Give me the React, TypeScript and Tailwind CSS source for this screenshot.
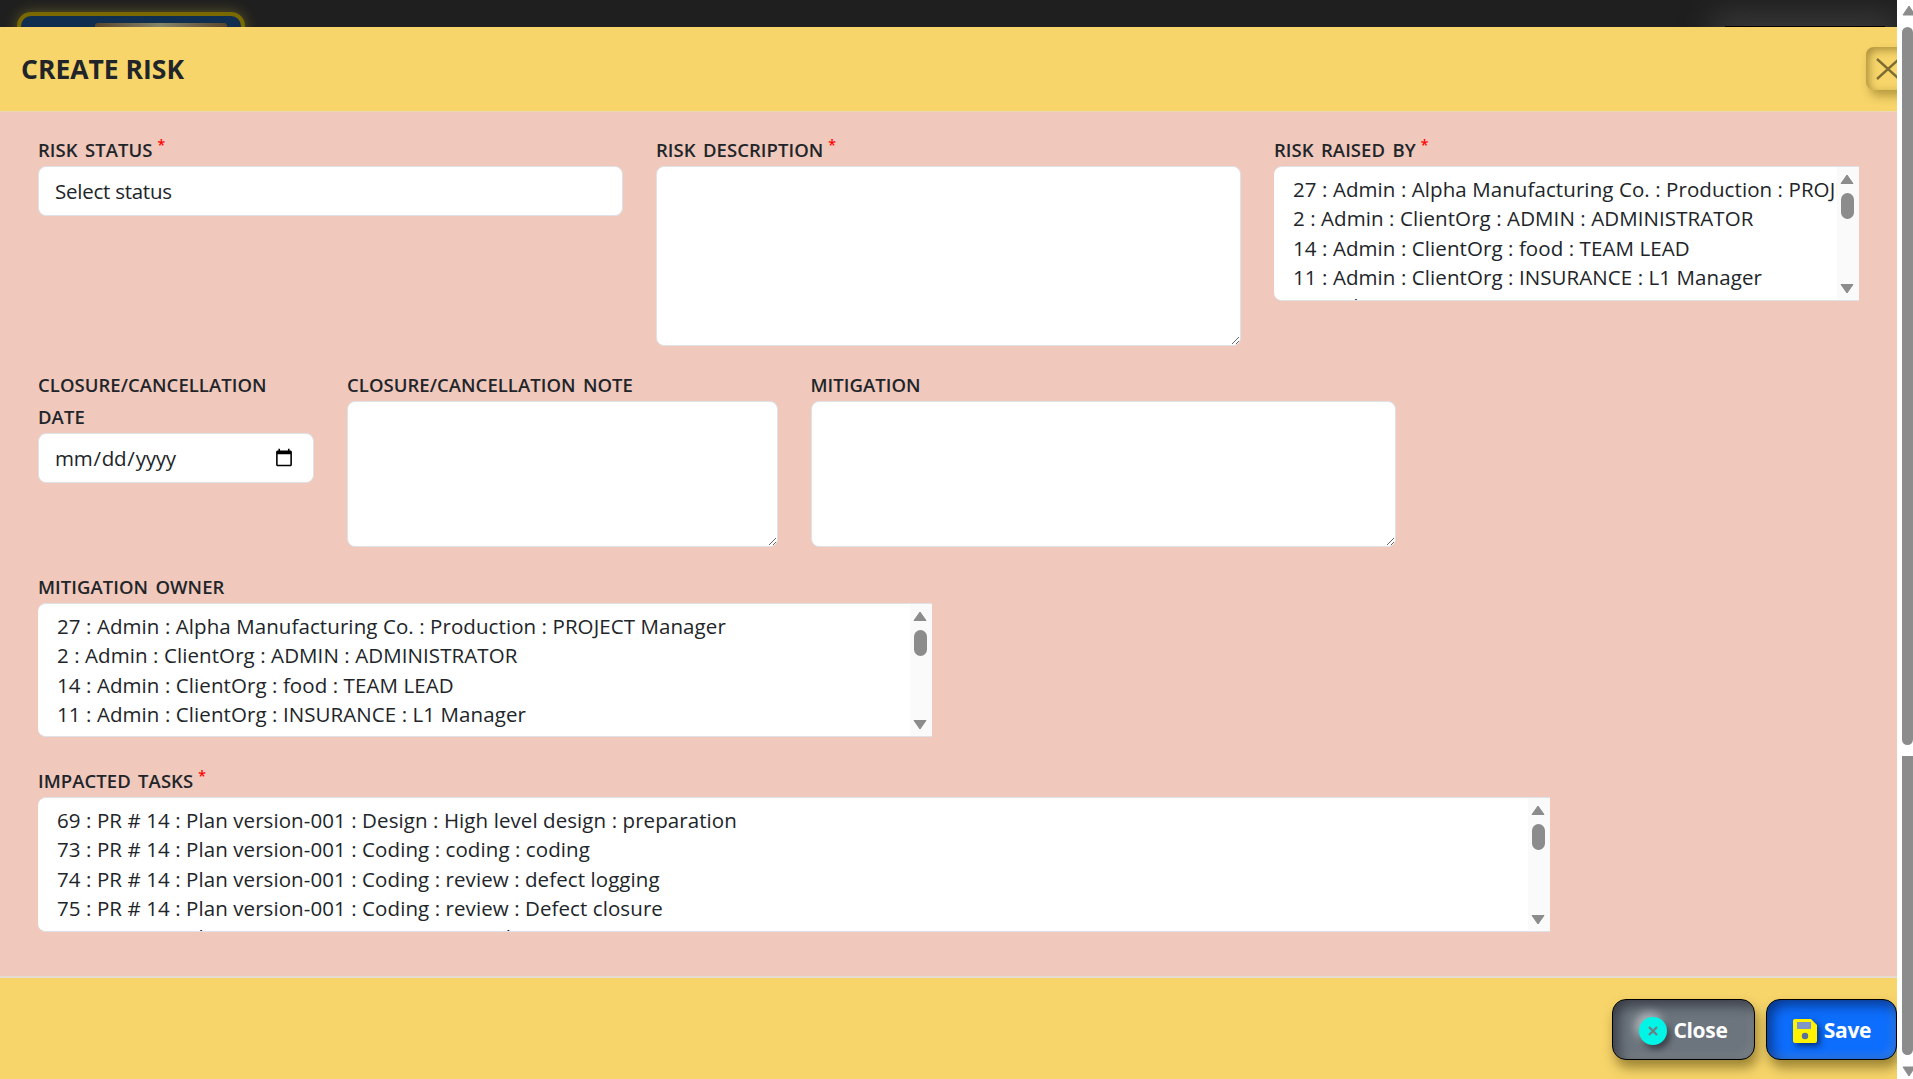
import React from "react";

const owners = [
  "27 : Admin : Alpha Manufacturing Co. : Production : PROJECT Manager",
  "2 : Admin : ClientOrg : ADMIN : ADMINISTRATOR",
  "14 : Admin : ClientOrg : food : TEAM LEAD",
  "11 : Admin : ClientOrg : INSURANCE : L1 Manager",
  "12 : Admin : LOTUS Org : INSURANCE : TEAM LEAD",
];
const tasks = [
  "69 : PR # 14 : Plan version-001 : Design : High level design : preparation",
  "73 : PR # 14 : Plan version-001 : Coding : coding : coding",
  "74 : PR # 14 : Plan version-001 : Coding : review : defect logging",
  "75 : PR # 14 : Plan version-001 : Coding : review : Defect closure",
  "76 : PR # 14 : Plan version-001 : Testing : Test Plan : preparation",
];

function Label({ text, required }: { text: string; required?: boolean }) {
  return (
    <label className="block text-[18.5px] leading-[32px] font-semibold text-[#212529] tracking-[0.05px] [word-spacing:2.5px]">
      {text}
      {required && <sup className="text-[#ff0000] text-[14px] ml-[5px] font-semibold">*</sup>}
    </label>
  );
}

function Arrow({ down }: { down?: boolean }) {
  return (
    <svg width="14" height="11" viewBox="0 0 14 11" className="block">
      <path
        d={down ? "M1 1.5H13L7 10Z" : "M7 1L13 9.5H1Z"}
        fill="#8c8c8c"
        stroke="#8c8c8c"
        strokeWidth="1"
        strokeLinejoin="round"
      />
    </svg>
  );
}

function ListBox({ items, tall }: { items: string[]; tall?: boolean }) {
  return (
    <div className={`flex ${tall ? "h-[135px]" : "h-[134px]"} bg-white rounded-l-[8px] border-b border-t border-[#dee2e6] overflow-hidden`}>
      <div className="flex-1 min-w-0 overflow-hidden pl-[19px] pt-[8px]">
        {items.map((t) => (
          <div key={t} className="h-[29.3px] leading-[29.3px] text-[20.5px] text-[#212529] whitespace-nowrap tracking-[0.08px]">
            {t}
          </div>
        ))}
      </div>
      <div className="w-[22px] shrink-0 bg-[#fafafa] flex flex-col items-center pt-[7px] pb-[6px] pr-[2px]">
        <Arrow />
        <div className="w-[13px] h-[26px] mt-[8px] rounded-full bg-[#8c8c8c]" />
        <div className="flex-1" />
        <Arrow down />
      </div>
    </div>
  );
}

const boxCls =
  "block w-full bg-white border border-[#dee2e6] rounded-[8px] text-[20.5px] text-[#212529] px-[16px] outline-none tracking-[-0.25px]";

export default function App() {
  return (
    <div className="flex h-screen w-full overflow-hidden bg-white font-['Open_Sans','Noto_Sans',sans-serif]">
      <div className="flex-1 min-w-0 flex flex-col overflow-hidden">
        {/* dark page strip behind the dialog */}
        <div className="h-[27px] shrink-0 bg-[#1f1f1f] flex justify-between overflow-hidden pl-[17px] pr-[12px]">
          <div className="mt-[12px] h-[40px] w-[228px] rounded-t-[14px] border-[4px] border-[#7a6800] bg-[#0f2e50] shadow-[0_0_14px_rgba(240,215,60,0.3)] pt-[7px] pl-[74px] pr-[14px]">
            <div className="h-[20px] rounded-[3px] bg-gradient-to-r from-[#5a452c] via-[#85856a] to-[#5a452c]" />
          </div>
          <div className="mt-[26px] h-[8px] w-[160px] bg-black shadow-[0_0_30px_12px_rgba(80,80,80,0.55)]" />
        </div>

        {/* header */}
        <div className="h-[85px] shrink-0 bg-[#f7d56a] border-b border-[#ead9b4] flex items-center justify-between pl-[21px] overflow-hidden">
          <h1 className="text-[26.5px] font-bold text-[#212529] mt-[2px]">CREATE RISK</h1>
          <button className="w-[43px] h-[43px] mr-[-12px] mt-[-1px] shrink-0 rounded-[8px] flex items-center justify-center bg-[#f7d56a] shadow-[inset_3px_3px_8px_rgba(80,60,0,0.45),4px_6px_10px_rgba(90,70,0,0.4)]">
            <svg width="24" height="24" viewBox="0 0 24 24">
              <path d="M1 2L23 22M23 2L1 22" stroke="#7d6c32" strokeWidth="2.4" fill="none" />
            </svg>
          </button>
        </div>

        {/* body */}
        <div className="flex-1 min-h-0 bg-[#f0c8bc] pl-[38px] pt-[22px] pr-[38px]">
          <div className="grid grid-cols-12 gap-x-[33px] mb-[23px]">
            <div className="col-span-4">
              <Label text="RISK STATUS" required />
              <select className={`${boxCls} h-[50px] appearance-none`}>
                <option>Select status</option>
              </select>
            </div>
            <div className="col-span-4">
              <Label text="RISK DESCRIPTION" required />
              <textarea className={`${boxCls} h-[180px]`} />
            </div>
            <div className="col-span-4">
              <Label text="RISK RAISED BY" required />
              <ListBox items={owners} tall />
            </div>
          </div>

          <div className="grid grid-cols-12 gap-x-[33px] mb-[24px]">
            <div className="col-span-2">
              <Label text="CLOSURE/CANCELLATION DATE" />
              <input type="date" className={`${boxCls} h-[50px] pl-[15px] pr-[17px]`} />
            </div>
            <div className="col-span-3">
              <Label text="CLOSURE/CANCELLATION NOTE" />
              <textarea className={`${boxCls} h-[146px]`} />
            </div>
            <div className="col-span-4">
              <Label text="MITIGATION" />
              <textarea className={`${boxCls} h-[146px]`} />
            </div>
          </div>

          <div className="grid grid-cols-12 gap-x-[33px] mb-[28px]">
            <div className="col-span-6">
              <Label text="MITIGATION OWNER" />
              <ListBox items={owners} />
            </div>
          </div>

          <div className="grid grid-cols-12 gap-x-[33px]">
            <div className="col-span-10">
              <Label text="IMPACTED TASKS" required />
              <ListBox items={tasks} tall />
            </div>
          </div>
        </div>

        {/* footer */}
        <div className="h-[103px] shrink-0 bg-[#f7d56a] border-t-[2px] border-[#e4dcd0] flex justify-end gap-[11px] pt-[21px]">
          <button className="w-[143px] h-[61px] pt-[2px] rounded-[14px] border border-black bg-[#6c757d] flex items-center justify-center gap-[6px] text-white text-[21px] font-bold tracking-[-0.3px] shadow-[inset_4px_4px_14px_rgba(20,20,30,0.7),inset_-3px_-3px_10px_rgba(200,205,210,0.35),3px_8px_12px_rgba(70,55,0,0.5)]">
            <span className="w-[28px] h-[28px] rounded-full bg-[#00f5e6] flex items-center justify-center shadow-[-4px_-5px_10px_rgba(255,255,255,0.45),3px_4px_6px_rgba(20,20,30,0.6)]">
              <svg width="12" height="12" viewBox="0 0 12 12">
                <path d="M2 2L10 10M10 2L2 10" stroke="#6f7c82" strokeWidth="2.2" />
              </svg>
            </span>
            Close
          </button>
          <button className="w-[131px] h-[61px] pt-[2px] rounded-[14px] border border-black bg-[#0d6efd] flex items-center justify-center gap-[6px] text-white text-[21px] font-bold tracking-[-0.3px] shadow-[inset_4px_4px_14px_rgba(0,20,70,0.7),inset_-3px_-3px_10px_rgba(140,190,255,0.35),3px_8px_12px_rgba(70,55,0,0.5)]">
            <svg width="26" height="26" viewBox="0 0 26 26" className="drop-shadow-[3px_3px_3px_rgba(0,20,70,0.7)]">
              <path d="M3 1H19L25 7V23Q25 25 23 25H3Q1 25 1 23V3Q1 1 3 1Z" fill="#fff200" />
              <rect x="5" y="4" width="14" height="7" fill="#7f96c8" />
              <circle cx="13" cy="18" r="3.2" fill="#5a6f9a" />
            </svg>
            Save
          </button>
        </div>
      </div>

      {/* page scrollbar */}
      <div className="w-[16px] shrink-0 flex flex-col items-end pl-[5px] bg-white overflow-hidden">
        <svg width="14" height="11" viewBox="0 0 14 11" className="mt-[5px] shrink-0 mr-[-3px]">
          <path d="M7 1L13 10H1Z" fill="#8c8c8c" stroke="#8c8c8c" strokeLinejoin="round" />
        </svg>
        <div className="w-[11px] h-[718px] mt-[11px] rounded-t-[6px] rounded-b-[6px] bg-[#8c8c8c] shrink-0" />
        <div className="w-[11px] h-[299px] mt-[11px] rounded-b-[6px] bg-[#8c8c8c] shrink-0" />
        <svg width="14" height="11" viewBox="0 0 14 11" className="mt-[11px] shrink-0 mr-[-3px]">
          <path d="M1 1H13L7 10Z" fill="#8c8c8c" stroke="#8c8c8c" strokeLinejoin="round" />
        </svg>
      </div>
    </div>
  );
}
